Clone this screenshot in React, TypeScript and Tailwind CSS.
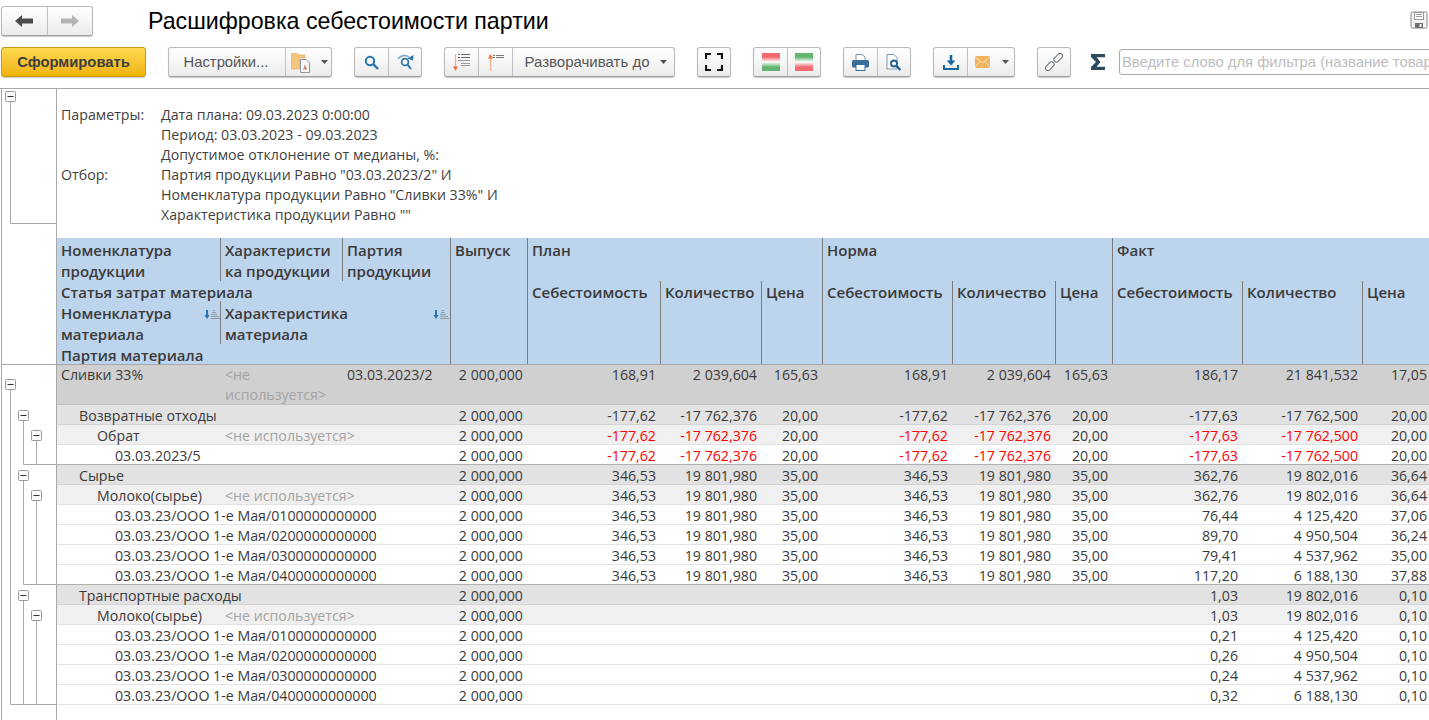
import React from "react";

const gridCols =
  "grid grid-cols-[163px_122px_108px_77px_133px_101px_61px_130px_103px_57px_130px_120px_67px]";
const group =
  "flex h-[30px] shrink-0 overflow-hidden rounded-[3px] border border-[#b9b9b9] border-b-[#a0a0a0] bg-linear-to-b from-white to-[#ececec] shadow-[0_1px_1px_#c8c8c8]";
const seg = "flex h-full items-center justify-center";
const segL = "flex h-full items-center justify-center border-l border-[#c0c0c0]";

const Caret = () => (
  <svg width="7" height="4" viewBox="0 0 7 4"><path d="M0 0h7L3.5 4z" fill="#555" /></svg>
);

const Arrow = ({ dir, color }: { dir: "l" | "r"; color: string }) => (
  <svg width="18" height="12" viewBox="0 0 18 12">
    <path d={dir === "l" ? "M0 6L7 0v3.5h11v5H7V12z" : "M18 6L11 0v3.5H0v5h11V12z"} fill={color} />
  </svg>
);

const Folder = () => (
  <svg width="19" height="21" viewBox="0 0 19 21">
    <path d="M0 3V1.5h6L8 3h6v3H9v11H0z" fill="#f2c67c" stroke="#e2ad5a" strokeWidth="0.6" />
    <path d="M9.5 7.5h5.5l3.5 3.5v9.5h-9z" fill="#f7f7f7" stroke="#8d979f" strokeWidth="1" />
    <path d="M12 17.5l2-5 2 5z" fill="#cf8a72" />
    <path d="M14 17.5v-2.5l2 2.5z" fill="#7aa87a" />
  </svg>
);

const Search = () => (
  <svg width="15" height="15" viewBox="0 0 15 15" fill="none">
    <circle cx="6" cy="6" r="4.2" stroke="#2b74ab" strokeWidth="2" />
    <path d="M9.2 9.2L14 14" stroke="#2b74ab" strokeWidth="2.4" />
  </svg>
);

const SearchAgain = () => (
  <svg width="17" height="16" viewBox="0 0 17 16" fill="none">
    <circle cx="8" cy="8" r="3.4" stroke="#2b74ab" strokeWidth="1.7" />
    <path d="M10.4 10.4L14 15" stroke="#2b74ab" strokeWidth="2" />
    <path d="M1 5C3 1.5 8 0.5 12 3" stroke="#6fa6c9" strokeWidth="1.5" />
    <path d="M16.5 1L16 6.5L10.5 4.5z" fill="#2b74ab" />
  </svg>
);

const SortDown = () => (
  <svg width="17" height="17" viewBox="0 0 17 17">
    <path d="M2.5 0v13" stroke="#f2b08a" strokeWidth="1.2" />
    <path d="M2.5 17l2.5-4.5H0z" fill="#e8743b" />
    <path d="M5 .5h2M8 .5h9M5 3.5h2M8 3.5h9" stroke="#666" />
    <path d="M5 6.5h12M8 9.5h9M8 11.5h9" stroke="#9a9a9a" />
  </svg>
);

const SortUp = () => (
  <svg width="16" height="17" viewBox="0 0 16 17">
    <path d="M2.5 17V4" stroke="#f2b08a" strokeWidth="1.2" />
    <path d="M2.5 0l2.5 4.5H0z" fill="#e8743b" />
    <path d="M5 1.5h2M8 1.5h8M5 3.5h2M8 3.5h8" stroke="#777" />
  </svg>
);

const Fullscreen = () => (
  <svg width="18" height="18" viewBox="0 0 18 18" fill="none" stroke="#111" strokeWidth="2.2">
    <path d="M1 6V1h5M12 1h5v5M17 12v5h-5M6 17H1v-5" />
  </svg>
);

const Bars = ({ flip }: { flip?: boolean }) => {
  const id = flip ? "bf" : "bn";
  const a = flip ? "#62b56f" : "#f26a6e";
  const b = flip ? "#f26a6e" : "#62b56f";
  return (
    <svg width="18" height="18" viewBox="0 0 18 18">
      <defs>
        <linearGradient id={id} x1="0" y1="0" x2="0" y2="1">
          <stop offset="0.22" stopColor={a} />
          <stop offset="0.5" stopColor="#fff" />
          <stop offset="0.78" stopColor={b} />
        </linearGradient>
      </defs>
      <rect width="18" height="18" fill={`url(#${id})`} />
    </svg>
  );
};

const Printer = () => (
  <svg width="17" height="17" viewBox="0 0 17 17">
    <path d="M4 .5h6l3 2.5v4H4z" fill="#fff" stroke="#7e97ad" />
    <rect x="0" y="6" width="17" height="7.5" rx="1.5" fill="#3b6f9b" />
    <rect x="4" y="10.5" width="9" height="6" fill="#fff" stroke="#3b6f9b" />
  </svg>
);

const Preview = () => (
  <svg width="16" height="17" viewBox="0 0 16 17" fill="none">
    <path d="M1 .5h7l3 3V15H1z" fill="#fff" stroke="#7e97ad" />
    <circle cx="8" cy="9.5" r="3" fill="#fff" stroke="#1f5f8f" strokeWidth="1.8" />
    <path d="M10.2 11.7L14.5 16" stroke="#1f5f8f" strokeWidth="2.2" />
  </svg>
);

const Download = () => (
  <svg width="16" height="15" viewBox="0 0 16 15">
    <path d="M6.7 0h2.6v5.5h3L8 10.5 3.7 5.5h3z" fill="#1d659d" />
    <path d="M1 10v4h14v-4" fill="none" stroke="#1d659d" strokeWidth="2" />
  </svg>
);

const Mail = () => (
  <svg width="15" height="12" viewBox="0 0 15 12">
    <rect width="15" height="12" rx="1" fill="#f0b460" />
    <path d="M0 1l7.5 6L15 1M0 11l5-5.5M15 11l-5-5.5" stroke="#fbe3b9" strokeWidth="1" fill="none" />
  </svg>
);

const LinkIcon = () => (
  <svg width="18" height="18" viewBox="0 0 18 18" fill="none" stroke="#5f6b75" strokeWidth="1">
    <rect x="-6" y="-2.5" width="10" height="5" rx="2.5" transform="translate(5.5 12.5) rotate(-45)" />
    <rect x="-4" y="-2.5" width="10" height="5" rx="2.5" transform="translate(12.5 5.5) rotate(-45)" fill="#f7f7f7" />
  </svg>
);

const Sigma = () => (
  <svg width="14" height="16" viewBox="0 0 14 16">
    <path d="M0 0h14v3.2H5.6L9.5 8l-3.9 4.8H14V16H0v-3L5 8 0 3z" fill="#2d4a5f" />
  </svg>
);

const Floppy = () => (
  <svg width="18" height="18" viewBox="0 0 18 18" fill="none">
    <path d="M1 2.5A1.5 1.5 0 0 1 2.5 1h13A1.5 1.5 0 0 1 17 2.5v13a1.5 1.5 0 0 1-1.5 1.5h-13A1.5 1.5 0 0 1 1 15.5z" fill="#f3f3f3" stroke="#8a8a8a" />
    <rect x="4.5" y="1.5" width="9" height="7" fill="#fff" stroke="#9a9a9a" />
    <path d="M6 3.5h6M6 5.5h6" stroke="#9a9a9a" />
    <rect x="5" y="12" width="8" height="5" fill="#6f6f6f" />
    <rect x="9.5" y="13" width="2" height="3" fill="#f3f3f3" />
  </svg>
);

const SortMark = () => (
  <svg width="16" height="9" viewBox="0 0 16 9" className="mt-[7px] shrink-0">
    <path d="M2 0h2v5h1.6L3 9 .4 5H2z" fill="#2b74ab" />
    <path d="M9 .5h2M8 2.5h4M7 4.5h6M7 6.5h8M7 8.5h9" stroke="#8f9aa5" strokeWidth="1" />
  </svg>
);

const Box = ({ x, y }: { x: number; y: number }) => (
  <rect x={x + 0.5} y={y + 0.5} width="10" height="10" rx="1" fill="#fafafa" stroke="#9a9a9a" />
);
const Minus = ({ x, y }: { x: number; y: number }) => (
  <path d={`M${x + 2.5} ${y + 5.5}h6`} stroke="#333" />
);

const boxes = [
  [5, 91],
  [5, 379],
  [18, 410],
  [31, 430],
  [18, 470],
  [31, 490],
  [18, 590],
  [31, 610],
];

const Tree = () => (
  <svg width="54" height="631" viewBox="2 89 54 631" className="block">
    <g stroke="#a8a8a8" fill="none">
      <path d="M10.5 101V223.5H56" />
      <path d="M2 364.5H56" />
      <path d="M10.5 389V704.5H56" />
      <path d="M23.5 420V464.5H56M36.5 440V464" />
      <path d="M23.5 480V584.5H56M36.5 500V584" />
      <path d="M23.5 600V704M36.5 620V704" />
    </g>
    {boxes.map(([x, y]) => (
      <g key={`${x}-${y}`}>
        <Box x={x} y={y} />
        <Minus x={x} y={y} />
      </g>
    ))}
  </svg>
);

type Level = 1 | 2 | 3 | 4;
type Row = {
  level: Level;
  name: string;
  unused?: boolean;
  batch?: string;
  nums: string[];
  red?: boolean;
  topLine?: boolean;
};

const rowStyle: Record<Level, string> = {
  1: "bg-[#d0d0d0] border-b border-[#c2c2c2] h-[40px]",
  2: "bg-[#e2e2e2] border-b border-[#d4d4d4] h-[20px] pt-[1px]",
  3: "bg-[#f0f0f0] border-b border-[#e2e2e2] h-[20px] pt-[1px]",
  4: "bg-white border-b border-[#e4e4e4] h-[20px] pt-[1px]",
};
const indent: Record<Level, string> = {
  1: "pl-[4px]",
  2: "pl-[22px]",
  3: "pl-[40px]",
  4: "pl-[58px]",
};

const sour = (a: string, b: string, c: string, d: string, e: string) => [
  a, b, "20,00", a, b, "20,00", c, d, e,
];
const raw = ["346,53", "19 801,980", "35,00", "346,53", "19 801,980", "35,00"];
const blank = ["", "", "", "", "", ""];

const rows: Row[] = [
  {
    level: 1,
    name: "Сливки 33%",
    unused: true,
    batch: "03.03.2023/2",
    nums: ["168,91", "2 039,604", "165,63", "168,91", "2 039,604", "165,63", "186,17", "21 841,532", "17,05"],
  },
  { level: 2, name: "Возвратные отходы", nums: sour("-177,62", "-17 762,376", "-177,63", "-17 762,500", "20,00") },
  { level: 3, name: "Обрат", unused: true, red: true, nums: sour("-177,62", "-17 762,376", "-177,63", "-17 762,500", "20,00") },
  { level: 4, name: "03.03.2023/5", red: true, nums: sour("-177,62", "-17 762,376", "-177,63", "-17 762,500", "20,00") },
  { level: 2, name: "Сырье", topLine: true, nums: [...raw, "362,76", "19 802,016", "36,64"] },
  { level: 3, name: "Молоко(сырье)", unused: true, nums: [...raw, "362,76", "19 802,016", "36,64"] },
  { level: 4, name: "03.03.23/ООО 1-е Мая/0100000000000", nums: [...raw, "76,44", "4 125,420", "37,06"] },
  { level: 4, name: "03.03.23/ООО 1-е Мая/0200000000000", nums: [...raw, "89,70", "4 950,504", "36,24"] },
  { level: 4, name: "03.03.23/ООО 1-е Мая/0300000000000", nums: [...raw, "79,41", "4 537,962", "35,00"] },
  { level: 4, name: "03.03.23/ООО 1-е Мая/0400000000000", nums: [...raw, "117,20", "6 188,130", "37,88"] },
  { level: 2, name: "Транспортные расходы", topLine: true, nums: [...blank, "1,03", "19 802,016", "0,10"] },
  { level: 3, name: "Молоко(сырье)", unused: true, nums: [...blank, "1,03", "19 802,016", "0,10"] },
  { level: 4, name: "03.03.23/ООО 1-е Мая/0100000000000", nums: [...blank, "0,21", "4 125,420", "0,10"] },
  { level: 4, name: "03.03.23/ООО 1-е Мая/0200000000000", nums: [...blank, "0,26", "4 950,504", "0,10"] },
  { level: 4, name: "03.03.23/ООО 1-е Мая/0300000000000", nums: [...blank, "0,24", "4 537,962", "0,10"] },
  { level: 4, name: "03.03.23/ООО 1-е Мая/0400000000000", nums: [...blank, "0,32", "6 188,130", "0,10"] },
];

const TableRow = ({ r }: { r: Row }) => {
  const redIdx = r.red ? [0, 1, 3, 4, 6, 7] : [];
  const line = r.topLine ? "relative shadow-[0_-1px_0_#b0b0b0]" : "";
  return (
    <div className={`${gridCols} ${rowStyle[r.level]} ${line}`}>
      {r.unused ? (
        <>
          <div className={`${indent[r.level]} whitespace-nowrap`}>{r.name}</div>
          <div className={`pl-[5px] pr-[4px] text-[#a3a3a3] ${r.level === 1 ? "" : "whitespace-nowrap"}`}>
            {"<не используется>"}
          </div>
          <div className="pl-[5px]">{r.batch}</div>
        </>
      ) : (
        <div className={`col-span-3 whitespace-nowrap ${indent[r.level]}`}>{r.name}</div>
      )}
      <div className="pr-[4px] text-right whitespace-nowrap">2 000,000</div>
      {r.nums.map((n, i) => (
        <div
          key={i}
          className={`whitespace-nowrap text-right ${i === 8 ? "pr-[2px]" : "pr-[4px]"} ${
            redIdx.includes(i) ? "text-[#ff0000]" : ""
          }`}
        >
          {n}
        </div>
      ))}
    </div>
  );
};

const headCell = "border-l border-[#7b7b7b] pl-[4px]";

const TableHead = () => (
  <div
    className={`${gridCols} h-[127px] grid-rows-[43px_20px_43px_20px] border-b border-[#a8a8a8] bg-[#bdd4ed] text-[15px] font-semibold text-[#3a3a3a] leading-[21px]`}
  >
    <div className="col-start-1 row-start-1 pl-[4px] pt-[2px]">Номенклатура<br />продукции</div>
    <div className={`col-start-2 row-start-1 whitespace-nowrap pt-[2px] ${headCell}`}>Характеристи<br />ка продукции</div>
    <div className={`col-start-3 row-start-1 pt-[2px] ${headCell}`}>Партия<br />продукции</div>
    <div className={`col-start-4 row-span-4 row-start-1 pt-[2px] ${headCell}`}>Выпуск</div>
    <div className={`col-span-3 col-start-5 row-start-1 pt-[2px] ${headCell}`}>План</div>
    <div className={`col-span-3 col-start-8 row-start-1 pt-[2px] ${headCell}`}>Норма</div>
    <div className={`col-span-3 col-start-11 row-start-1 pt-[2px] ${headCell}`}>Факт</div>

    <div className="col-span-3 col-start-1 row-start-2 pl-[4px] pt-[1px] whitespace-nowrap">Статья затрат материала</div>
    <div className="col-start-1 row-start-3 flex justify-between pl-[4px] pt-[2px]">
      <span>Номенклатура<br />материала</span>
      <SortMark />
    </div>
    <div className={`col-span-2 col-start-2 row-start-3 flex justify-between pr-[1px] pt-[2px] ${headCell}`}>
      <span>Характеристика<br />материала</span>
      <SortMark />
    </div>
    <div className="col-span-3 col-start-1 row-start-4 pl-[4px] pt-[1px] whitespace-nowrap">Партия материала</div>

    {["Себестоимость", "Количество", "Цена", "Себестоимость", "Количество", "Цена", "Себестоимость", "Количество", "Цена"].map(
      (t, i) => (
        <div
          key={i}
          style={{ gridColumnStart: i + 5 }}
          className={`row-span-3 row-start-2 whitespace-nowrap pt-[1px] ${headCell}`}
        >
          {t}
        </div>
      )
    )}
  </div>
);

export default function App() {
  return (
    <div className="relative h-[720px] w-[1429px] overflow-hidden bg-white font-['Liberation_Sans',Arial,sans-serif] text-[#3a3a3a]">
      <header className="h-[88px] overflow-hidden">
        <div className="flex h-[47px] items-start pt-[6px]">
          <div className={`${group} ml-[1px] w-[92px]`}>
            <div className={`${seg} w-[46px]`}>
              <Arrow dir="l" color="#4d4d4d" />
            </div>
            <div className={`${segL} w-[46px]`}>
              <Arrow dir="r" color="#b4b4b4" />
            </div>
          </div>
          <h1 className="ml-[55px] text-[23.2px] leading-[30px] whitespace-nowrap text-black">
            Расшифровка себестоимости партии
          </h1>
          <div className="ml-auto mr-[1px] mt-[5px]">
            <Floppy />
          </div>
        </div>
        <div className="flex h-[30px] gap-[22px] pl-[1px] text-[14.8px]">
          <div className="flex h-[30px] w-[145px] shrink-0 items-center justify-center rounded-[3px] border border-[#c79a12] bg-linear-to-b from-[#ffd94f] to-[#efb400] font-bold text-[#3d3d3d] shadow-[0_1px_1px_#c8c8c8]">
            Сформировать
          </div>
          <div className={`${group} w-[164px]`}>
            <div className={`${seg} w-[114px] text-[#555]`}>Настройки...</div>
            <div className={`${segL} ml-[2px] w-[46px] gap-[11px] pl-[1px]`}>
              <Folder />
              <Caret />
            </div>
          </div>
          <div className={`${group} w-[68px]`}>
            <div className={`${seg} w-[33px]`}><Search /></div>
            <div className={`${segL} w-[33px]`}><SearchAgain /></div>
          </div>
          <div className={`${group} w-[231px]`}>
            <div className={`${seg} w-[33px]`}><SortDown /></div>
            <div className={`${segL} w-[34px]`}><SortUp /></div>
            <div className={`${segL} flex-1 gap-[10px] whitespace-nowrap pl-[4px] text-[15px] text-[#555]`}>
              Разворачивать до
              <Caret />
            </div>
          </div>
          <div className={`${group} w-[34px]`}>
            <div className={`${seg} w-full`}><Fullscreen /></div>
          </div>
          <div className={`${group} w-[68px]`}>
            <div className={`${seg} w-[33px]`}><Bars /></div>
            <div className={`${segL} w-[33px]`}><Bars flip /></div>
          </div>
          <div className={`${group} w-[68px]`}>
            <div className={`${seg} w-[33px]`}><Printer /></div>
            <div className={`${segL} w-[33px]`}><Preview /></div>
          </div>
          <div className={`${group} w-[82px]`}>
            <div className={`${seg} w-[33px]`}><Download /></div>
            <div className={`${segL} w-[47px] gap-[12px] pl-[1px]`}>
              <Mail />
              <Caret />
            </div>
          </div>
          <div className={`${group} w-[34px]`}>
            <div className={`${seg} w-full`}><LinkIcon /></div>
          </div>
          <div className="ml-[-2px] flex h-[30px] w-[14px] shrink-0 items-center">
            <Sigma />
          </div>
          <div className="ml-[-8px] mt-[2px] flex h-[26px] w-[320px] shrink-0 items-center overflow-hidden whitespace-nowrap rounded-[3px] border border-[#a8a8a8] pl-[2px] text-[#bdbdbd]">
            Введите слово для фильтра (название товар
          </div>
        </div>
      </header>

      <main className="flex h-[632px] border-t border-[#a8a8a8] font-['Open_Sans',sans-serif] text-[14.2px] leading-[20px]">
        <div className="ml-[1px] h-full w-[56px] shrink-0 border-x border-[#a8a8a8]">
          <Tree />
        </div>
        <div className="min-w-0 flex-1">
          <div className="h-[149px] pl-[4px] pt-[16px] text-[#3f3f3f]">
            <div className="grid grid-cols-[100px_1fr]">
              <div>Параметры:</div>
              <div>Дата плана: 09.03.2023 0:00:00</div>
              <div />
              <div>Период: 03.03.2023 - 09.03.2023</div>
              <div />
              <div>Допустимое отклонение от медианы, %:</div>
              <div>Отбор:</div>
              <div>Партия продукции Равно "03.03.2023/2" И</div>
              <div />
              <div>Номенклатура продукции Равно "Сливки 33%" И</div>
              <div />
              <div>Характеристика продукции Равно ""</div>
            </div>
          </div>
          <TableHead />
          {rows.map((r, i) => (
            <TableRow key={i} r={r} />
          ))}
        </div>
      </main>
    </div>
  );
}
